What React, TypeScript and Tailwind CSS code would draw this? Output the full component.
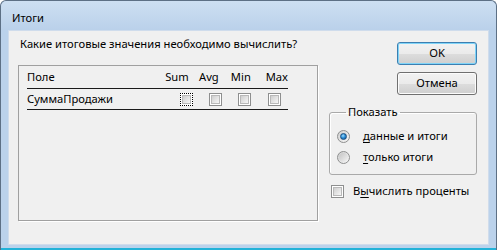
import React from "react";

const font = { fontFamily: '"Noto Sans", "Open Sans", sans-serif' };

function Check({ focused = false }: { focused?: boolean }) {
  return (
    <div
      className={
        "flex h-[13px] w-[13px] shrink-0 items-center justify-center bg-white " +
        (focused ? "border border-dotted border-black" : "border border-[#8e8f8f]")
      }
    >
      <div className="h-[9px] w-[9px] border border-[#b9b9b9] bg-gradient-to-br from-[#cfcfcf] to-[#f7f7f7]" />
    </div>
  );
}

function Radio({ checked = false }: { checked?: boolean }) {
  return (
    <div className="flex h-[13px] w-[13px] shrink-0 items-center justify-center rounded-full border border-[#8e8f8f] bg-gradient-to-br from-[#d0d0d0] to-[#f8f8f8]">
      {checked ? (
        <div className="h-[7px] w-[7px] rounded-full border border-[#1b4f80] bg-[radial-gradient(circle_at_40%_35%,#9fdcff_0%,#2d8fd6_45%,#0d4f91_100%)]" />
      ) : (
        <div className="h-[9px] w-[9px] rounded-full bg-gradient-to-br from-[#c4c4c4] to-[#f4f4f4]" />
      )}
    </div>
  );
}

function Button({ label, primary = false }: { label: string; primary?: boolean }) {
  return (
    <div
      className={
        "flex h-[23px] w-[80px] items-center justify-center rounded-[3px] border bg-[linear-gradient(#f2f2f2_0%,#ebebeb_50%,#dddddd_51%,#cfcfcf_100%)] text-black " +
        (primary
          ? "border-[#3c7fb1] shadow-[inset_0_0_0_1px_#7fd4f8]"
          : "border-[#707070] shadow-[inset_0_0_0_1px_#fcfcfc]")
      }
    >
      {label}
    </div>
  );
}

export default function App() {
  return (
    <div className="h-[250px] w-[498px] bg-white text-[11.2px]" style={font}>
      <div className="flex h-[250px] w-[497px] flex-col rounded-t-[6px] border-x border-t border-[#5d7085] bg-[#bbd2eb]">
        <div className="flex h-[29px] shrink-0 items-center rounded-t-[6px] bg-[linear-gradient(#cddff2,#bad1ea)] pl-[11px] pt-[5px] text-black">
          Итоги
        </div>
        <div className="flex flex-1 px-[7px]">
          <div className="flex flex-1 border border-[#cfdcec] bg-[#f0f0f0] text-black">
            <div className="flex flex-col pl-[9px]">
              <div className="ml-[2px] mt-[5px] h-[16px] whitespace-nowrap leading-[16px]">
                Какие итоговые значения необходимо вычислить?
              </div>
              <div className="mt-[13px] h-[156px] w-[300px] border border-[#a0a0a0] shadow-[1px_1px_0_#ffffff]">
                <div className="ml-[8px] w-[261px]">
                  <div className="flex h-[23px] items-center border-b-[1.5px] border-[#1a1a1a]">
                    <div className="w-[139px]">Поле</div>
                    <div className="w-[34px]">Sum</div>
                    <div className="w-[32px]">Avg</div>
                    <div className="w-[35px]">Min</div>
                    <div>Max</div>
                  </div>
                  <div className="flex h-[21px] items-center border-b-[1.5px] border-[#1a1a1a]">
                    <div className="w-[153px]">СуммаПродажи</div>
                    <Check focused />
                    <div className="ml-[16px]">
                      <Check />
                    </div>
                    <div className="ml-[16px]">
                      <Check />
                    </div>
                    <div className="ml-[17px]">
                      <Check />
                    </div>
                  </div>
                </div>
              </div>
            </div>
            <div className="ml-[11px] flex w-[148px] flex-col pt-[11px]">
              <div className="ml-auto">
                <Button label="OK" primary />
              </div>
              <div className="ml-auto mt-[7px]">
                <Button label="Отмена" />
              </div>
              <fieldset className="mt-[9px] rounded-[3px] border border-[#a9a9a9] px-[7px] pb-[6px] pt-[6px] shadow-[inset_1px_1px_0_#ffffff]">
                <legend className="ml-[9px] px-[2px] leading-[16px]">Показать</legend>
                <div className="flex h-[21px] items-center">
                  <Radio checked />
                  <span className="ml-[13px] whitespace-nowrap">
                    <span className="underline underline-offset-2">д</span>анные и итоги
                  </span>
                </div>
                <div className="flex h-[21px] items-center">
                  <Radio />
                  <span className="ml-[13px] whitespace-nowrap">
                    <span className="underline underline-offset-2">т</span>олько итоги
                  </span>
                </div>
              </fieldset>
              <div className="ml-[2px] mt-[8px] flex h-[16px] items-center">
                <Check />
                <span className="ml-[9px] whitespace-nowrap">
                  В<span className="underline underline-offset-2">ы</span>числить проценты
                </span>
              </div>
            </div>
          </div>
        </div>
        <div className="h-[3px] shrink-0" />
        <div className="h-[2px] shrink-0 bg-[#22b2d8]" />
      </div>
    </div>
  );
}
